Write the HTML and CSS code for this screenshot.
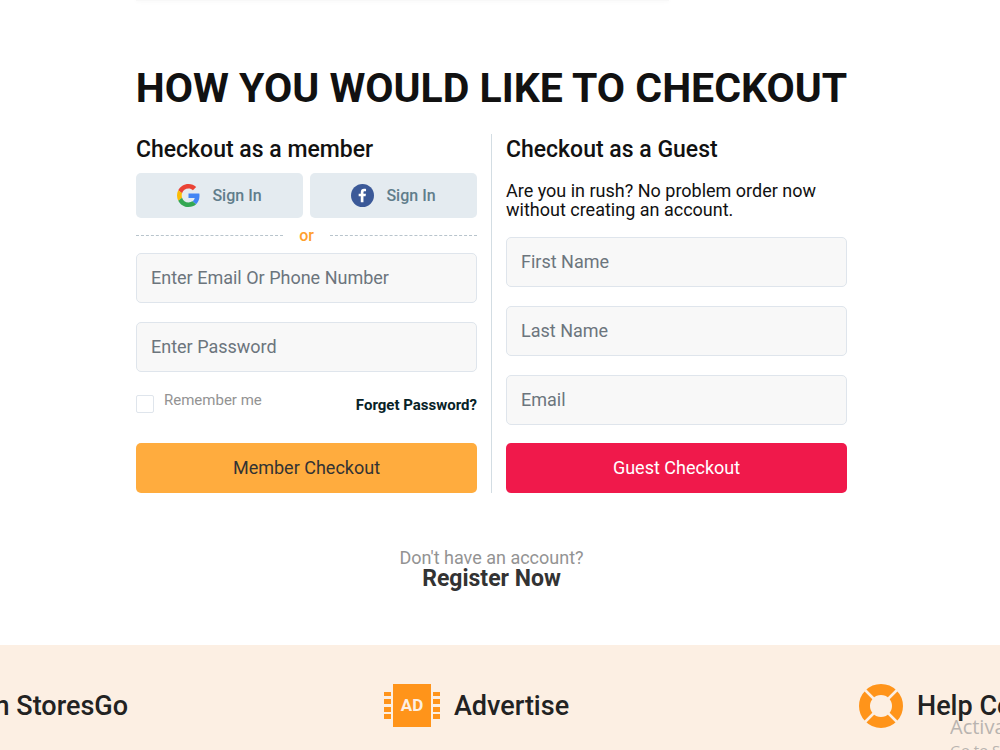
FILE: index.html
```html
<!DOCTYPE html>
<html lang="en">
<head>
<meta charset="utf-8">
<meta name="viewport" content="width=device-width, initial-scale=1">
<title>Checkout</title>
<link rel="stylesheet" href="styles.css">
</head>
<body>
<main class="page">
  <div class="previous-card"></div>
  <h1 class="title">HOW YOU WOULD LIKE TO CHECKOUT</h1>
  <div class="options">
    <form class="option">
      <h2 class="option-title">Checkout as a member</h2>
      <div class="social">
        <button class="social-button" type="button">
          <svg class="social-icon" viewBox="0 0 48 48" aria-hidden="true">
            <path fill="#ea4335" d="M24 9.500c3.540 0 6.710 1.220 9.210 3.600l6.850-6.850C35.900 2.380 30.470 0 24 0 14.620 0 6.510 5.380 2.560 13.220l7.980 6.190C12.430 13.720 17.740 9.500 24 9.500z"/>
            <path fill="#4285f4" d="M46.980 24.550c0-1.570-.15-3.090-.38-4.550H24v9.020h12.940c-.58 2.960-2.260 5.480-4.780 7.180l7.730 6c4.510-4.180 7.090-10.360 7.090-17.650z"/>
            <path fill="#fbbc05" d="M10.530 28.590c-.48-1.450-.76-2.990-.76-4.590s.27-3.140.76-4.590l-7.980-6.190C.92 16.460 0 20.120 0 24s.92 7.540 2.560 10.780l7.970-6.190z"/>
            <path fill="#34a853" d="M24 48c6.480 0 11.930-2.130 15.890-5.810l-7.730-6c-2.150 1.450-4.920 2.300-8.160 2.300-6.260 0-11.570-4.220-13.470-9.910l-7.980 6.190C6.510 42.620 14.620 48 24 48z"/>
          </svg>
          Sign In
        </button>
        <button class="social-button" type="button">
          <svg class="social-icon" viewBox="0 0 24 24" aria-hidden="true">
            <circle cx="12" cy="12" r="12" fill="#3b5998"/>
            <path fill="#fff" d="M10.200 19v-6.200H8v-2.600h2.200V8.500C10.200 6.200 11.500 5 13.600 5c.9 0 1.700.1 2.100.1v2.500h-1.300c-1.100 0-1.400.5-1.400 1.300v1.300h2.600l-.4 2.600H13V19z"/>
          </svg>
          Sign In
        </button>
      </div>
      <div class="divider">or</div>
      <div class="fields">
        <input class="field" type="text" placeholder="Enter Email Or Phone Number" aria-label="Enter Email Or Phone Number">
        <input class="field" type="password" placeholder="Enter Password" aria-label="Enter Password">
      </div>
      <div class="extras">
        <label class="remember"><input class="remember-box" type="checkbox"><span class="remember-text">Remember me</span></label>
        <a class="forgot" href="#">Forget Password?</a>
      </div>
      <button class="submit submit-member" type="submit">Member Checkout</button>
    </form>
    <div class="separator"></div>
    <form class="option">
      <h2 class="option-title">Checkout as a Guest</h2>
      <p class="guest-note">Are you in rush? No problem order now without creating an account.</p>
      <div class="fields">
        <input class="field" type="text" placeholder="First Name" aria-label="First Name">
        <input class="field" type="text" placeholder="Last Name" aria-label="Last Name">
        <input class="field" type="email" placeholder="Email" aria-label="Email">
      </div>
      <button class="submit submit-guest" type="submit">Guest Checkout</button>
    </form>
  </div>
  <div class="register">
    <p class="register-note">Don't have an account?</p>
    <a class="register-link" href="#">Register Now</a>
  </div>
</main>
<footer class="footer">
  <a class="footer-link footer-link-first" href="#">Sell on StoresGo</a>
  <a class="footer-link footer-link-middle" href="#">
    <svg class="ad-icon" viewBox="0 0 56 44" aria-hidden="true">
      <path fill="#ff941a" d="M9 0h38v43H9zM0 8h7v4H0zM0 15h7v5H0zM0 23h7v5H0zM0 30h7v5H0zM49 8h7v4h-7zM49 15h7v5h-7zM49 23h7v5h-7zM49 30h7v5h-7z"/>
      <text class="ad-text" x="28" y="27" text-anchor="middle">AD</text>
    </svg>
    Advertise
  </a>
  <a class="footer-link" href="#">
    <svg class="help-icon" viewBox="0 0 44 44" aria-hidden="true">
      <circle cx="22" cy="22" r="16.500" fill="none" stroke="#ff941a" stroke-width="11"/>
      <path stroke="#fcefe3" stroke-width="2.600" d="M5 5l10 10M39 5L29 15M5 39l10-10M39 39L29 29"/>
    </svg>
    Help Center
  </a>
</footer>
<aside class="watermark">
  <p class="watermark-title">Activate Windows</p>
  <p class="watermark-note">Go to Settings to activate Windows.</p>
</aside>
</body>
</html>
```
FILE: styles.css
```css
* { box-sizing: border-box; }
body {
  margin: 0;
  font-family: Roboto, "Liberation Sans", sans-serif;
  color: #111;
  background: #fff;
  overflow: hidden;
}
h1, h2, p { margin: 0; }
a { color: inherit; text-decoration: none; }
button, input { font-family: inherit; }
.page {
  max-width: 728px;
  margin: 0 auto;
  padding-right: 17px;
}
.previous-card {
  width: 75%;
  height: 1px;
  background: #f8f8f8;
  box-shadow: 0 0 4px #e8e8e8;
}
.title {
  margin: 62px -8px 0;
  font-size: 41px;
  line-height: 50px;
  font-weight: 700;
  text-align: center;
}
.options {
  display: grid;
  grid-template-columns: 1fr 1px 1fr;
  gap: 14px;
  min-height: 359px;
  margin-top: 21px;
}
.separator { background: #d3dde3; }
.option {
  display: flex;
  flex-direction: column;
  min-width: 0;
}
.option-title {
  font-size: 23px;
  line-height: 31px;
  font-weight: 500;
}
.social {
  display: grid;
  grid-template-columns: 1fr 1fr;
  gap: 7px;
  margin-top: 8px;
}
.social-button {
  display: flex;
  align-items: center;
  justify-content: center;
  gap: 12px;
  height: 45px;
  border: 0;
  border-radius: 5px;
  background: #e4ebf0;
  color: #607d8b;
  font-size: 16px;
  font-weight: 500;
}
.social-icon { width: 23px; height: 23px; }
.divider {
  display: flex;
  align-items: center;
  gap: 16px;
  height: 35px;
  color: #ff9f2e;
  font-size: 16px;
  font-weight: 500;
}
.divider::before, .divider::after {
  content: "";
  flex: 1;
  border-top: 1px dashed #b8c4cc;
}
.fields { display: grid; gap: 19px; }
.field {
  width: 100%;
  height: 50px;
  padding: 0 14px 2px;
  border: 1px solid #dfe5ec;
  border-radius: 5px;
  background: #f8f8f8;
  font-size: 18px;
}
.field::placeholder { color: #6c757d; opacity: 1; }
.extras {
  display: flex;
  justify-content: space-between;
  margin-top: 18px;
}
.remember { display: flex; gap: 10px; }
.remember-box {
  appearance: none;
  width: 18px;
  height: 18px;
  margin: 5px 0 0;
  border: 1px solid #dfe5ec;
  border-radius: 2px;
}
.remember-text { color: #939393; font-size: 15px; line-height: 20px; }
.forgot {
  padding-top: 5px;
  color: #072227;
  font-size: 15px;
  line-height: 20px;
  font-weight: 700;
}
.submit {
  height: 50px;
  margin-top: auto;
  padding: 0 0 2px;
  border: 0;
  border-radius: 5px;
  font-size: 18px;
}
.submit-member { background: #ffac3e; color: #333; }
.submit-guest { background: #f0194b; color: #fff; }
.guest-note {
  margin: 16px 0 18px;
  font-size: 18px;
  line-height: 19px;
}
.register { margin-top: 55px; text-align: center; }
.register-note { color: #939393; font-size: 18px; line-height: 20px; }
.register-link {
  display: block;
  color: #333;
  font-size: 23px;
  line-height: 22px;
  font-weight: 700;
}
.footer {
  display: grid;
  grid-template-columns: 128px 1fr 141px;
  align-items: center;
  height: 121px;
  margin-top: 55px;
  background: #fcefe3;
  color: #222;
  font-size: 27px;
  font-weight: 500;
  overflow: hidden;
}
.footer-link {
  display: flex;
  align-items: center;
  gap: 14px;
  white-space: nowrap;
}
.footer-link-first { justify-content: flex-end; }
.footer-link-middle { justify-content: center; padding-right: 34px; }
.ad-icon { width: 56px; height: 44px; }
.ad-text { fill: #fcefe3; font-size: 17px; font-weight: 700; }
.help-icon { width: 44px; height: 44px; flex: none; }
.watermark {
  position: absolute;
  top: 714px;
  left: 95%;
  right: 0;
  overflow: hidden;
  color: #b9b4b0;
  font-family: "Open Sans", sans-serif;
  white-space: nowrap;
}
.watermark-title { font-size: 20px; line-height: 25px; }
.watermark-note { font-size: 15px; line-height: 22px; }
```
